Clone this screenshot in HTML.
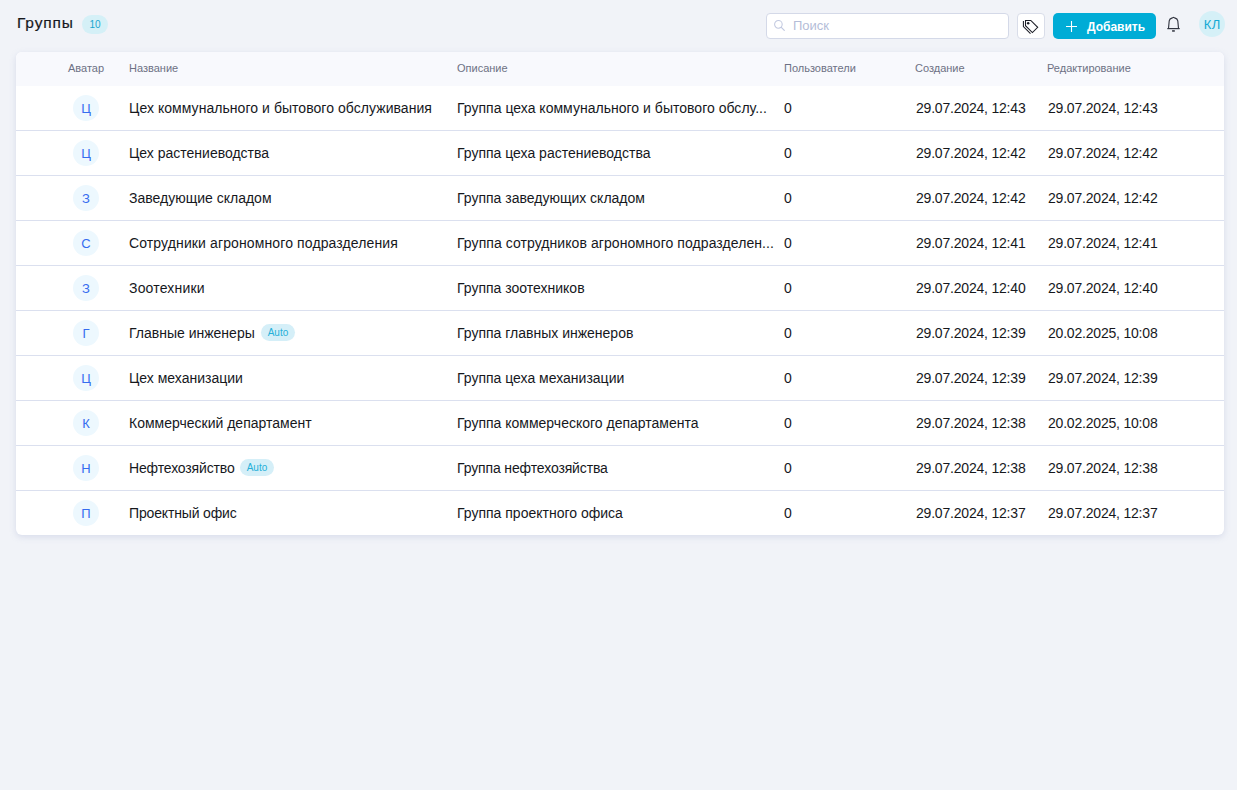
<!DOCTYPE html>
<html lang="ru"><head><meta charset="utf-8"><title>Группы</title>
<style>
*{margin:0;padding:0;box-sizing:border-box}
html,body{width:1237px;height:790px;overflow:hidden}
body{background:#f1f3f8;font-family:"Liberation Sans",sans-serif;position:relative;color:#16181d}
.title{position:absolute;left:17px;top:13px;height:20px;line-height:20px;font-size:15.5px;color:#16181d;letter-spacing:0.85px;-webkit-text-stroke:0.2px #16181d}
.cnt{position:absolute;left:82px;top:15px;width:26px;height:19px;line-height:20px;border-radius:10px;background:#d5f0f7;color:#1aa6cf;font-size:10px;text-align:center}
.search{position:absolute;left:766px;top:13px;width:243px;height:26px;border:1px solid #d4d9e8;border-radius:4px;background:#fff}
.sic{position:absolute;left:6px;top:5px}
.ph{position:absolute;left:26px;top:0;line-height:24px;font-size:13px;color:#b4bdd8}
.tagbtn{position:absolute;left:1017px;top:13px;width:28px;height:26px;border:1px solid #d9dde9;border-radius:4px;background:#fff}
.add{position:absolute;left:1053px;top:13px;width:103px;height:26px;border-radius:5px;background:#00acd6}
.addt{position:absolute;left:34px;top:0;line-height:28px;font-size:12px;font-weight:bold;color:#fff}
.bell{position:absolute;left:1162px;top:14px}
.me{position:absolute;left:1199px;top:11px;width:26px;height:26px;border-radius:50%;background:#d5f0f7;color:#14a9d4;font-size:13px;line-height:28px;text-align:center;letter-spacing:0.4px;text-indent:0.4px}
.card{position:absolute;left:16px;top:52px;width:1208px;height:483px;background:#fff;border-radius:6px;box-shadow:0 2px 6px rgba(150,160,200,0.28);overflow:hidden}
.hd{position:absolute;left:0;top:0;width:100%;height:34px;background:#f8f9fd}
.h{position:absolute;top:0;line-height:33px;font-size:11px;color:#6d7184}
.row{position:absolute;left:0;width:100%;height:44px}
.rb{position:absolute;left:0;width:100%;height:1px;background:#dbe0ef}
.av{position:absolute;left:57px;top:9px;width:26px;height:26px;border-radius:50%;background:#edf8fe;color:#356cf0;font-size:13px;text-align:center;line-height:28px}
.c{position:absolute;top:0;line-height:44px;font-size:14px;white-space:nowrap}
.name{left:113px;width:320px}
.desc{left:441px;width:315px}
.users{left:768px;font-size:14px}
.cr{left:900px;font-size:14px;letter-spacing:-0.2px}
.ed{left:1032px;font-size:14px;letter-spacing:-0.2px}
.auto{position:absolute;top:13px;width:34px;height:17px;line-height:18px;border-radius:9px;background:#d5eff8;color:#27b0d8;font-size:10px;text-align:center}

</style></head><body>
<div class="title">Группы</div>
<div class="cnt">10</div>
<div class="search"><svg class="sic" width="14" height="14" viewBox="0 0 14 14"><circle cx="5.4" cy="5.35" r="3.8" fill="none" stroke="#c2c9e0" stroke-width="1.05"/><path d="M8.3 8.3 L11.3 11.3" stroke="#c2c9e0" stroke-width="1.2" stroke-linecap="round"/></svg><span class="ph">Поиск</span></div>
<div class="tagbtn"><svg width="28" height="26" viewBox="0 0 28 26" style="position:absolute;left:-1px;top:-1px"><path d="M8.5 7.4 H13.8 L20.7 14.3 L15.4 19.6 L8.5 12.7 Z" fill="none" stroke="#1b1d26" stroke-width="1.05" stroke-linejoin="miter"/><path d="M6.4 8.1 V13.6 L13.5 20.6" fill="none" stroke="#1b1d26" stroke-width="1.05"/><circle cx="11.2" cy="10.3" r="1.25" fill="#1b1d26"/></svg></div>
<div class="add"><svg width="12" height="12" viewBox="0 0 12 12" style="position:absolute;left:13px;top:8px"><path d="M5.5 0 V11 M0 5.5 H11" stroke="#fff" stroke-width="1.1"/></svg><span class="addt">Добавить</span></div>
<svg class="bell" width="24" height="20" viewBox="0 0 24 20"><path d="M6.5 14.4 L7.2 6.9 C7.4 5.3 8.6 4.4 10.3 3.9 L11.5 3.3 L12.7 3.9 C14.4 4.4 15.6 5.3 15.8 6.9 L16.5 14.4" fill="none" stroke="#30333f" stroke-width="1.1" stroke-linejoin="miter"/><path d="M5.3 14.6 H17.7" stroke="#30333f" stroke-width="1.2"/><rect x="10.1" y="16.2" width="2.7" height="1.5" fill="#30333f"/></svg>
<div class="me">КЛ</div>
<div class="card">
<div class="hd">
<div class="h" style="left:52px">Аватар</div>
<div class="h" style="left:113px">Название</div>
<div class="h" style="left:441px">Описание</div>
<div class="h" style="left:768px">Пользователи</div>
<div class="h" style="left:899px">Создание</div>
<div class="h" style="left:1031px">Редактирование</div>
</div>
<div class="row" style="top:34px">
<div class="av"><span>Ц</span></div>
<div class="c name" style="letter-spacing:0.05px">Цех коммунального и бытового обслуживания</div>
<div class="c desc" style="letter-spacing:0.02px">Группа цеха коммунального и бытового обслу...</div>
<div class="c users">0</div>
<div class="c cr">29.07.2024, 12:43</div>
<div class="c ed">29.07.2024, 12:43</div>
</div><div class="rb" style="top:78px"></div><div class="row" style="top:79px">
<div class="av"><span>Ц</span></div>
<div class="c name" style="letter-spacing:0px">Цех растениеводства</div>
<div class="c desc" style="letter-spacing:0px">Группа цеха растениеводства</div>
<div class="c users">0</div>
<div class="c cr">29.07.2024, 12:42</div>
<div class="c ed">29.07.2024, 12:42</div>
</div><div class="rb" style="top:123px"></div><div class="row" style="top:124px">
<div class="av"><span>З</span></div>
<div class="c name" style="letter-spacing:0px">Заведующие складом</div>
<div class="c desc" style="letter-spacing:0px">Группа заведующих складом</div>
<div class="c users">0</div>
<div class="c cr">29.07.2024, 12:42</div>
<div class="c ed">29.07.2024, 12:42</div>
</div><div class="rb" style="top:168px"></div><div class="row" style="top:169px">
<div class="av"><span>С</span></div>
<div class="c name" style="letter-spacing:0.12px">Сотрудники агрономного подразделения</div>
<div class="c desc" style="letter-spacing:0.07px">Группа сотрудников агрономного подразделен...</div>
<div class="c users">0</div>
<div class="c cr">29.07.2024, 12:41</div>
<div class="c ed">29.07.2024, 12:41</div>
</div><div class="rb" style="top:213px"></div><div class="row" style="top:214px">
<div class="av"><span>З</span></div>
<div class="c name" style="letter-spacing:0.18px">Зоотехники</div>
<div class="c desc" style="letter-spacing:0px">Группа зоотехников</div>
<div class="c users">0</div>
<div class="c cr">29.07.2024, 12:40</div>
<div class="c ed">29.07.2024, 12:40</div>
</div><div class="rb" style="top:258px"></div><div class="row" style="top:259px">
<div class="av"><span>Г</span></div>
<div class="c name" style="letter-spacing:0px">Главные инженеры</div><span class="auto" style="left:245px">Auto</span>
<div class="c desc" style="letter-spacing:0px">Группа главных инженеров</div>
<div class="c users">0</div>
<div class="c cr">29.07.2024, 12:39</div>
<div class="c ed">20.02.2025, 10:08</div>
</div><div class="rb" style="top:303px"></div><div class="row" style="top:304px">
<div class="av"><span>Ц</span></div>
<div class="c name" style="letter-spacing:0px">Цех механизации</div>
<div class="c desc" style="letter-spacing:0px">Группа цеха механизации</div>
<div class="c users">0</div>
<div class="c cr">29.07.2024, 12:39</div>
<div class="c ed">29.07.2024, 12:39</div>
</div><div class="rb" style="top:348px"></div><div class="row" style="top:349px">
<div class="av"><span>К</span></div>
<div class="c name" style="letter-spacing:0px">Коммерческий департамент</div>
<div class="c desc" style="letter-spacing:0px">Группа коммерческого департамента</div>
<div class="c users">0</div>
<div class="c cr">29.07.2024, 12:38</div>
<div class="c ed">20.02.2025, 10:08</div>
</div><div class="rb" style="top:393px"></div><div class="row" style="top:394px">
<div class="av"><span>Н</span></div>
<div class="c name" style="letter-spacing:-0.14px">Нефтехозяйство</div><span class="auto" style="left:224px">Auto</span>
<div class="c desc" style="letter-spacing:-0.13px">Группа нефтехозяйства</div>
<div class="c users">0</div>
<div class="c cr">29.07.2024, 12:38</div>
<div class="c ed">29.07.2024, 12:38</div>
</div><div class="rb" style="top:438px"></div><div class="row" style="top:439px">
<div class="av"><span>П</span></div>
<div class="c name" style="letter-spacing:-0.16px">Проектный офис</div>
<div class="c desc" style="letter-spacing:0px">Группа проектного офиса</div>
<div class="c users">0</div>
<div class="c cr">29.07.2024, 12:37</div>
<div class="c ed">29.07.2024, 12:37</div>
</div>
</div>
</body></html>
